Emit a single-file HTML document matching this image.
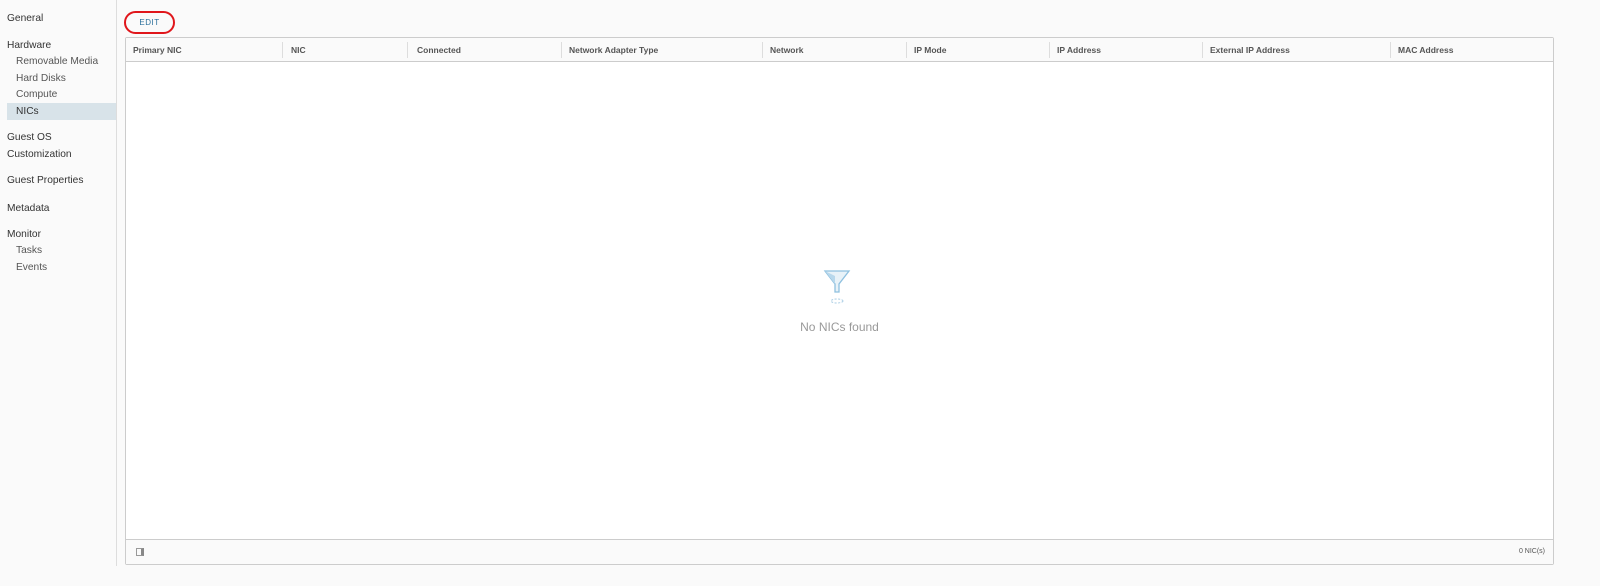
<!DOCTYPE html>
<html><head><style>
*{margin:0;padding:0;box-sizing:border-box}
body{width:1600px;height:586px;background:#fafafa;font-family:"Liberation Sans",sans-serif;position:relative;overflow:hidden;color:#333}
.side{position:absolute;left:0;top:0;width:117px;height:566px;border-right:1px solid #ddd;font-size:10.2px}
.side div{position:absolute;left:7px;white-space:nowrap}
.side .s{left:16px;color:#555}
.sel{position:absolute;left:7px;top:103px;width:109px;height:17px;background:#d8e3e9}
.edit{position:absolute;left:124px;top:11px;width:51px;height:23px;border:2px solid #e0161b;border-radius:12px;font-size:8px;color:#2a6f9b;letter-spacing:.5px;text-align:center;line-height:20px}
.tbl{position:absolute;left:125px;top:37px;width:1429px;height:528px;border:1px solid #ccc;background:#fff;border-radius:2px}
.hd{position:absolute;left:0;top:0;right:0;height:24px;border-bottom:1px solid #ccc;background:#fafafa;font-size:8.5px;font-weight:bold;color:#555}
.hd span{position:absolute;top:7px}
.hd i{position:absolute;top:4px;height:16px;border-left:1px solid #ddd}
.ft{position:absolute;left:0;bottom:0;right:0;height:25px;border-top:1px solid #ccc;background:#fafafa;font-size:7px;color:#555}
.empty{position:absolute;left:0;right:0;top:282px;text-align:center;font-size:12px;color:#999}
</style></head><body>
<div class="side">
<div class="sel"></div>
<div style="top:13px">General</div>
<div style="top:40px">Hardware</div>
<div class="s" style="top:56px">Removable Media</div>
<div class="s" style="top:73px">Hard Disks</div>
<div class="s" style="top:89px">Compute</div>
<div class="s" style="top:106px;color:#333">NICs</div>
<div style="top:132px">Guest OS</div>
<div style="top:149px">Customization</div>
<div style="top:175px">Guest Properties</div>
<div style="top:203px">Metadata</div>
<div style="top:229px">Monitor</div>
<div class="s" style="top:245px">Tasks</div>
<div class="s" style="top:262px">Events</div>
</div>
<div class="edit">EDIT</div>
<div class="tbl">
<div class="hd">
<span style="left:7px">Primary NIC</span><i style="left:156px"></i>
<span style="left:165px">NIC</span><i style="left:281px"></i>
<span style="left:291px">Connected</span><i style="left:435px"></i>
<span style="left:443px">Network Adapter Type</span><i style="left:636px"></i>
<span style="left:644px">Network</span><i style="left:780px"></i>
<span style="left:788px">IP Mode</span><i style="left:923px"></i>
<span style="left:931px">IP Address</span><i style="left:1076px"></i>
<span style="left:1084px">External IP Address</span><i style="left:1264px"></i>
<span style="left:1272px">MAC Address</span>
</div>
<svg style="position:absolute;left:696px;top:230px" width="30" height="40" viewBox="0 0 30 40">
<path d="M3 3 L27 3 L17 16 L17 24 L13 24 L13 16 Z" fill="#e8f2f8" stroke="#8ec0df" stroke-width="1.3"/>
<path d="M3 3 L13 16 L13 8 Z" fill="#b8d8ec"/>
<ellipse cx="15" cy="33" rx="6" ry="2" fill="none" stroke="#a9cde4" stroke-dasharray="2 1.5"/>
</svg>
<div class="empty">No NICs found</div>
<div class="ft">
<div style="position:absolute;left:10px;top:8px;width:8px;height:8px;border:1px solid #999;border-right:3px solid #888"></div>
<span style="position:absolute;right:8px;top:8px">0 NIC(s)</span>
</div>
</div>
</body></html>
